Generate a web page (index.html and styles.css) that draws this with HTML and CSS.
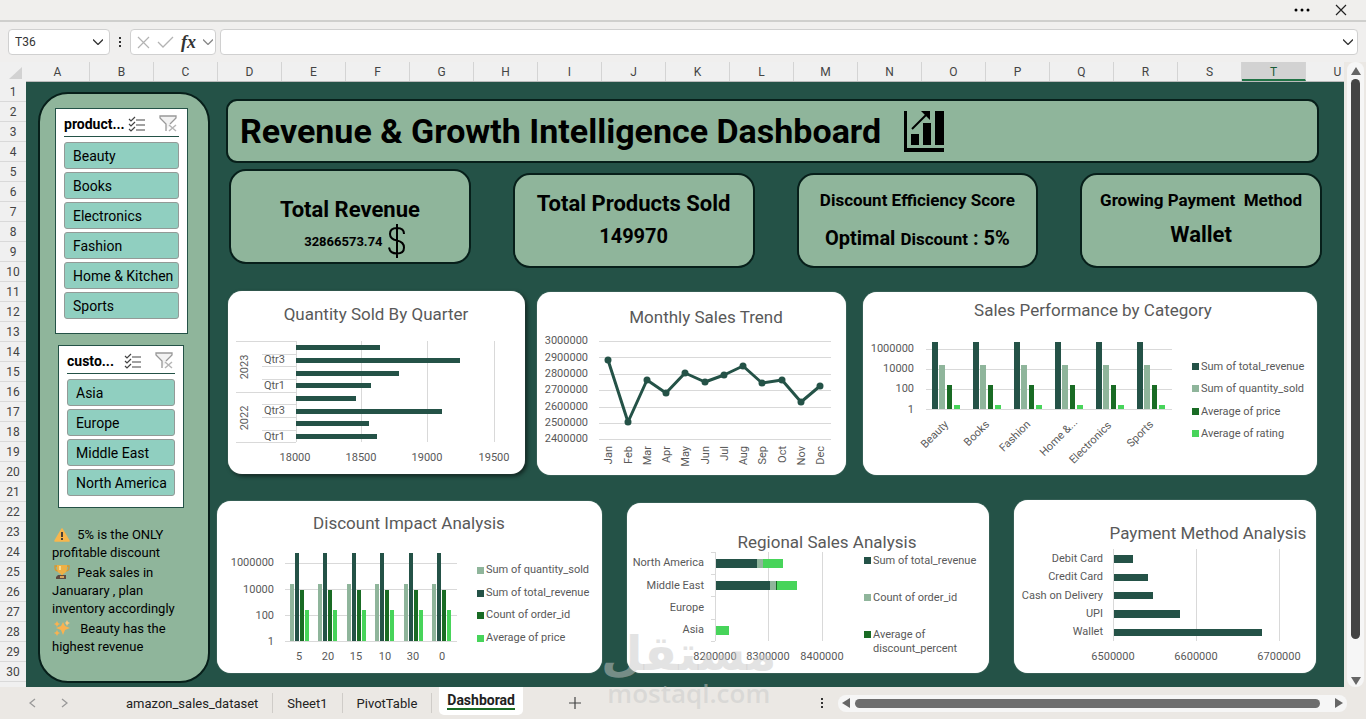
FILE: index.html
```html
<!DOCTYPE html>
<html lang="en">
<head>
<meta charset="UTF-8">
<meta name="viewport" content="width=device-width, initial-scale=1.0">
<title>Revenue &amp; Growth Intelligence Dashboard</title>
<link rel="stylesheet" href="styles.css">
</head>
<body>
<svg class="defs" width="0" height="0" aria-hidden="true">
    <symbol id="ic-multi" viewBox="0 0 18 16">
        <path d="M1 3l2 2 4-4M1 8l2 2 4-4M1 13l2 2 4-4M8 4h9M8 9h9M8 14h9" fill="none" stroke="#444" stroke-width="1.2"/>
    </symbol>
    <symbol id="ic-clear" viewBox="0 0 18 17">
        <path d="M1 1h16v3l-6 5v2l-4 4v-6L1 4z" fill="#f2f2f2"/>
        <path d="M7 16V9L1 3V1h16v2l-6 6" fill="none" stroke="#999" stroke-width="1.3"/>
        <path d="M10 10l7 6M17 10l-7 6" stroke="#b5b5b5" stroke-width="1.5"/>
    </symbol>
    <symbol id="ic-down" viewBox="0 0 10 6">
        <path d="M0 0.500l5 5 5-5" fill="none" stroke="currentColor" stroke-width="1.3"/>
    </symbol>
    <symbol id="ic-dots" viewBox="0 0 4 12">
        <path d="M1 1h2v2H1zM1 5h2v2H1zM1 9h2v2H1z" fill="#333"/>
    </symbol>
</svg>

<div class="app">
    <div class="titlebar">
        <button class="icon-btn" aria-label="More options"><svg width="16" height="4"><circle cx="2" cy="2" r="1.500"/><circle cx="8" cy="2" r="1.500"/><circle cx="14" cy="2" r="1.500"/></svg></button>
        <button class="icon-btn" aria-label="Close"><svg width="12" height="12"><path d="M1 1l10 10M11 1L1 11" stroke="#222" stroke-width="1.200"/></svg></button>
    </div>

    <div class="formula-bar">
        <div class="name-box">
            <input type="text" value="T36" aria-label="Name box">
            <svg width="10" height="6"><use href="#ic-down"/></svg>
        </div>
        <svg class="dots" width="4" height="12"><use href="#ic-dots"/></svg>
        <div class="fx-box">
            <button class="icon-btn" aria-label="Cancel"><svg width="13" height="13"><path d="M1 1l11 11M12 1L1 12" stroke="#b3b3b3" stroke-width="1.200"/></svg></button>
            <button class="icon-btn" aria-label="Enter"><svg width="17" height="12"><path d="M1 6l5 5L16 1" fill="none" stroke="#b3b3b3" stroke-width="1.300"/></svg></button>
            <button class="icon-btn fx" aria-label="Insert function"><i>fx</i></button>
            <svg class="faint" width="10" height="6"><use href="#ic-down"/></svg>
        </div>
        <div class="formula-input">
            <input type="text" aria-label="Formula">
            <svg width="10" height="6"><use href="#ic-down"/></svg>
        </div>
    </div>

    <div class="workspace">
        <div class="grid-area">
            <div class="corner"><svg width="13" height="12"><path d="M13 0v12H0z" fill="#d2d2d2"/></svg></div>
            <div class="cols">
                <span>A</span><span>B</span><span>C</span><span>D</span><span>E</span><span>F</span><span>G</span>
                <span>H</span><span>I</span><span>J</span><span>K</span><span>L</span><span>M</span><span>N</span>
                <span>O</span><span>P</span><span>Q</span><span>R</span><span>S</span><span class="selected">T</span><span>U</span>
            </div>
            <div class="rows">
                <span>1</span><span>2</span><span>3</span><span>4</span><span>5</span><span>6</span><span>7</span><span>8</span><span>9</span><span>10</span>
                <span>11</span><span>12</span><span>13</span><span>14</span><span>15</span><span>16</span><span>17</span><span>18</span><span>19</span><span>20</span>
                <span>21</span><span>22</span><span>23</span><span>24</span><span>25</span><span>26</span><span>27</span><span>28</span><span>29</span><span>30</span>
            </div>

            <div class="sheet">
                <aside class="sidebar">
                    <section class="slicer slicer-product">
                        <header>
                            <h3>product...</h3>
                            <svg width="18" height="16"><use href="#ic-multi"/></svg>
                            <svg width="18" height="17"><use href="#ic-clear"/></svg>
                        </header>
                        <button>Beauty</button>
                        <button>Books</button>
                        <button>Electronics</button>
                        <button>Fashion</button>
                        <button>Home &amp; Kitchen</button>
                        <button>Sports</button>
                    </section>
                    <section class="slicer slicer-region">
                        <header>
                            <h3>custo...</h3>
                            <svg width="18" height="16"><use href="#ic-multi"/></svg>
                            <svg width="18" height="17"><use href="#ic-clear"/></svg>
                        </header>
                        <button>Asia</button>
                        <button>Europe</button>
                        <button>Middle East</button>
                        <button>North America</button>
                    </section>
                    <div class="notes">
                        <p>
                            <svg width="16" height="14" viewBox="0 0 16 14"><path d="M8 1l7 12H1z" fill="#f8b64c" stroke="#f8b64c" stroke-width="1.500" stroke-linejoin="round"/><path d="M7 4h2v5H7zM7 10h2v2H7z" fill="#4a4038"/></svg>
                            5% is the ONLY profitable discount
                        </p>
                        <p>
                            <svg width="16" height="16" viewBox="0 0 16 16"><path d="M4 2H1v2q0 3 4 3M12 2h3v2q0 3-4 3" fill="none" stroke="#d9962e" stroke-width="1.300"/><path d="M3 1h10v3q0 5-4 6v2H7v-2Q3 9 3 4z" fill="#eeb044"/><path d="M5 2h2v4H5z" fill="#fbd988"/><path d="M4 11h8v4H2v-2z" fill="#5e4a40"/><path d="M6 12h4v2H6z" fill="#d9a45a"/></svg>
                            Peak sales in Januarary , plan inventory accordingly
                        </p>
                        <p>
                            <svg class="wide" width="16" height="16" viewBox="0 0 16 16"><path d="M9 2l2 4 5 2-5 2-2 5-2-5-5-2 5-2zM3 1l1 2 2 1-2 1-1 2-1-2-2-1 2-1zM3 10l1 2 2 1-2 1-1 2-1-2-2-1 2-1z" fill="#f9b250"/><path d="M13 0l1 2 2 1-2 1-1 2-1-2-1-1 1-1z" fill="#fbc87c"/></svg>
                            Beauty has the highest revenue
                        </p>
                    </div>
                </aside>

                <main>
                    <div class="banner">
                        <h1>Revenue &amp; Growth Intelligence Dashboard</h1>
                        <svg width="40" height="42" viewBox="0 0 40 42"><path d="M0 1h3v37h37v4H0z"/><path d="M7 24h8v11H7zM19 13h8v22h-8zM31 1h9v34h-9z"/><path d="M8 19L22 5" stroke="#000" stroke-width="2"/><path d="M17 1h9v9l-3-3-4-4z"/></svg>
                    </div>

                    <div class="kpis">
                        <section class="kpi raised">
                            <h2>Total Revenue</h2>
                            <p class="amount">32866573.74
                                <svg width="18" height="34" viewBox="0 0 18 34"><path d="M16 10q0-6-7-6-7 0-7 6 0 5 7 6.500 7 1.500 7 7 0 6-7 6-7 0-8-6M9 0v34" fill="none" stroke="#000" stroke-width="2"/></svg>
                            </p>
                        </section>
                        <section class="kpi">
                            <h2>Total Products Sold</h2>
                            <p class="value">149970</p>
                        </section>
                        <section class="kpi">
                            <h2 class="small">Discount Efficiency Score</h2>
                            <p class="score">Optimal <small>Discount</small> : 5%</p>
                        </section>
                        <section class="kpi">
                            <h2 class="small">Growing Payment&nbsp; Method</h2>
                            <p class="value wallet">Wallet</p>
                        </section>
                    </div>

                    <div class="charts charts-top">
                        <section class="card shadow">
                            <svg viewBox="0 0 297 183">
                                <path class="grid" d="M68 50v101M133 50v101M199 50v101M266 50v101M8 50h60M8 101h60M8 151h60M34 63h34M34 75h34M34 88h34M34 113h34M34 126h34M34 139h34"/>
                                <path class="c1" d="M68 54h84v5H68zM68 67h164v5H68zM68 80h103v5H68zM68 92h75v5H68zM68 105h60v5H68zM68 118h146v5H68zM68 130h73v5H68zM68 143h81v5H68z"/>
                                <text class="title" x="148" y="29">Quantity Sold By Quarter</text>
                                <g class="end">
                                    <text x="57" y="72">Qtr3</text><text x="57" y="98">Qtr1</text><text x="57" y="123">Qtr3</text><text x="57" y="149">Qtr1</text>
                                </g>
                                <g class="mid">
                                    <text transform="translate(20 76) rotate(-90)">2023</text>
                                    <text transform="translate(20 127) rotate(-90)">2022</text>
                                    <text x="67" y="170">18000</text><text x="133" y="170">18500</text><text x="199" y="170">19000</text><text x="266" y="170">19500</text>
                                </g>
                            </svg>
                        </section>
                        <section class="card">
                            <svg viewBox="0 0 309 183">
                                <path class="grid" d="M62 49h232M62 65h232M62 82h232M62 98h232M62 115h232M62 131h232M62 147h232"/>
                                <path class="line" d="M71 68L91 130 110 88 129 101 148 81 168 90 187 83 206 74 225 91 245 88 264 110 283 94"/>
                                <g class="c1">
                                    <circle cx="71" cy="68" r="3.500"/><circle cx="91" cy="130" r="3.500"/><circle cx="110" cy="88" r="3.500"/><circle cx="129" cy="101" r="3.500"/>
                                    <circle cx="148" cy="81" r="3.500"/><circle cx="168" cy="90" r="3.500"/><circle cx="187" cy="83" r="3.500"/><circle cx="206" cy="74" r="3.500"/>
                                    <circle cx="225" cy="91" r="3.500"/><circle cx="245" cy="88" r="3.500"/><circle cx="264" cy="110" r="3.500"/><circle cx="283" cy="94" r="3.500"/>
                                </g>
                                <text class="title" x="169" y="31">Monthly Sales Trend</text>
                                <g class="end">
                                    <text x="51" y="52">3000000</text><text x="51" y="69">2900000</text><text x="51" y="85">2800000</text><text x="51" y="101">2700000</text>
                                    <text x="51" y="118">2600000</text><text x="51" y="134">2500000</text><text x="51" y="150">2400000</text>
                                    <text transform="translate(75 154) rotate(-90)">Jan</text><text transform="translate(95 154) rotate(-90)">Feb</text>
                                    <text transform="translate(114 154) rotate(-90)">Mar</text><text transform="translate(133 154) rotate(-90)">Apr</text>
                                    <text transform="translate(152 154) rotate(-90)">May</text><text transform="translate(172 154) rotate(-90)">Jun</text>
                                    <text transform="translate(191 154) rotate(-90)">Jul</text><text transform="translate(210 154) rotate(-90)">Aug</text>
                                    <text transform="translate(229 154) rotate(-90)">Sep</text><text transform="translate(249 154) rotate(-90)">Oct</text>
                                    <text transform="translate(268 154) rotate(-90)">Nov</text><text transform="translate(287 154) rotate(-90)">Dec</text>
                                </g>
                            </svg>
                        </section>
                        <section class="card card-category">
                            <svg viewBox="0 0 454 183">
                                <path class="grid" d="M63 57h246M63 77h246M63 97h246M63 117h246"/>
                                <g id="cat-bars">
                                    <path class="c1" d="M69 50h6v67h-6z"/><path class="c2" d="M76 73h6v44h-6z"/><path class="c3" d="M84 93h5v24h-5z"/><path class="c4" d="M91 113h6v4h-6z"/>
                                </g>
                                <use href="#cat-bars" x="41"/><use href="#cat-bars" x="82"/><use href="#cat-bars" x="123"/><use href="#cat-bars" x="164"/><use href="#cat-bars" x="205"/>
                                <text class="title" x="230" y="24">Sales Performance by Category</text>
                                <g class="end">
                                    <text x="51" y="60">1000000</text><text x="51" y="80">10000</text><text x="51" y="100">100</text><text x="51" y="121">1</text>
                                    <text transform="translate(86 133) rotate(-45)">Beauty</text><text transform="translate(127 133) rotate(-45)">Books</text>
                                    <text transform="translate(168 133) rotate(-45)">Fashion</text><text transform="translate(215 131) rotate(-45)">Home &amp;...</text>
                                    <text transform="translate(249 134) rotate(-45)">Electronics</text><text transform="translate(291 133) rotate(-45)">Sports</text>
                                </g>
                                <path class="c1" d="M329 71h7v7h-7z"/><text x="338" y="78">Sum of total_revenue</text>
                                <path class="c2" d="M329 93h7v7h-7z"/><text x="338" y="100">Sum of quantity_sold</text>
                                <path class="c3" d="M329 116h7v7h-7z"/><text x="338" y="123">Average of price</text>
                                <path class="c4" d="M329 138h7v7h-7z"/><text x="338" y="145">Average of rating</text>
                            </svg>
                        </section>
                    </div>

                    <div class="charts charts-bottom">
                        <section class="card">
                            <svg viewBox="0 0 385 172">
                                <path class="grid" d="M68 62h172M68 88h172M68 114h172M68 140h172"/>
                                <g id="disc-bars">
                                    <path class="c2" d="M73 83h4v57h-4z"/><path class="c1" d="M78 52h4v88h-4z"/><path class="c3" d="M83 89h4v51h-4z"/><path class="c4" d="M88 109h4v31h-4z"/>
                                </g>
                                <use href="#disc-bars" x="28"/><use href="#disc-bars" x="57"/><use href="#disc-bars" x="85"/><use href="#disc-bars" x="114"/><use href="#disc-bars" x="142"/>
                                <text class="title" x="192" y="28">Discount Impact Analysis</text>
                                <g class="end">
                                    <text x="57" y="65">1000000</text><text x="57" y="92">10000</text><text x="57" y="118">100</text><text x="57" y="144">1</text>
                                </g>
                                <g class="mid">
                                    <text x="82" y="159">5</text><text x="111" y="159">20</text><text x="139" y="159">15</text><text x="168" y="159">10</text><text x="196" y="159">30</text><text x="225" y="159">0</text>
                                </g>
                                <path class="c2" d="M260 66h7v7h-7z"/><text x="269" y="72">Sum of quantity_sold</text>
                                <path class="c1" d="M260 89h7v7h-7z"/><text x="269" y="95">Sum of total_revenue</text>
                                <path class="c3" d="M260 111h7v7h-7z"/><text x="269" y="117">Count of order_id</text>
                                <path class="c4" d="M260 134h7v7h-7z"/><text x="269" y="140">Average of price</text>
                            </svg>
                        </section>
                        <section class="card">
                            <svg viewBox="0 0 362 170">
                                <path class="grid" d="M88 49v89M141 49v89M195 49v89M84 49h4M84 71h4M84 93h4M84 116h4M84 138h4"/>
                                <path class="c1" d="M89 56h41v9H89zM89 78h54v9H89z"/>
                                <path class="c2" d="M130 56h6v9h-6zM143 78h6v9h-6z"/>
                                <path class="c3" d="M149 78h1v9h-1z"/>
                                <path class="c4" d="M136 56h20v9h-20zM150 78h20v9h-20zM89 123h13v9H89z"/>
                                <text class="title" x="200" y="45">Regional Sales Analysis</text>
                                <g class="end">
                                    <text x="77" y="63">North America</text><text x="77" y="86">Middle East</text><text x="77" y="108">Europe</text><text x="77" y="130">Asia</text>
                                </g>
                                <g class="mid">
                                    <text x="88" y="157">8200000</text><text x="141" y="157">8300000</text><text x="195" y="157">8400000</text>
                                </g>
                                <path class="c1" d="M237 54h7v7h-7z"/><text x="246" y="61">Sum of total_revenue</text>
                                <path class="c2" d="M237 91h7v7h-7z"/><text x="246" y="98">Count of order_id</text>
                                <path class="c3" d="M237 128h7v7h-7z"/><text x="246" y="135">Average of</text><text x="246" y="149">discount_percent</text>
                            </svg>
                        </section>
                        <section class="card">
                            <svg viewBox="0 0 302 173">
                                <path class="grid" d="M99 49v92M182 49v92M265 49v92"/>
                                <path class="c1" d="M100 55h19v8h-19zM100 74h34v7h-34zM100 92h39v7h-39zM100 110h66v8h-66zM100 129h148v7H100z"/>
                                <text class="title" x="194" y="39">Payment Method Analysis</text>
                                <g class="end">
                                    <text x="89" y="62">Debit Card</text><text x="89" y="80">Credit Card</text><text x="89" y="99">Cash on Delivery</text><text x="89" y="117">UPI</text><text x="89" y="135">Wallet</text>
                                </g>
                                <g class="mid">
                                    <text x="99" y="160">6500000</text><text x="182" y="160">6600000</text><text x="265" y="160">6700000</text>
                                </g>
                            </svg>
                        </section>
                    </div>
                </main>
            </div>
        </div>

        <div class="vscroll">
            <svg width="10" height="8"><path d="M5 0l5 8H0z" fill="#666"/></svg>
            <div class="thumb"></div>
            <svg width="10" height="8"><path d="M0 0h10L5 8z" fill="#666"/></svg>
        </div>
    </div>

    <nav class="tabs">
        <button class="icon-btn arrow" aria-label="Previous sheet"><svg width="7" height="10"><path d="M6 1L1 5l5 4" fill="none" stroke="#999" stroke-width="1.300"/></svg></button>
        <button class="icon-btn arrow" aria-label="Next sheet"><svg width="7" height="10"><path d="M1 1l5 4-5 4" fill="none" stroke="#999" stroke-width="1.300"/></svg></button>
        <div class="tab-list">
            <button>amazon_sales_dataset</button>
            <button>Sheet1</button>
            <button>PivotTable</button>
            <button class="active"><span>Dashborad</span></button>
        </div>
        <button class="icon-btn add" aria-label="New sheet"><svg width="12" height="12"><path d="M6 0v12M0 6h12" stroke="#444" stroke-width="1.200"/></svg></button>
        <svg class="dots" width="4" height="12"><use href="#ic-dots"/></svg>
        <div class="hscroll">
            <svg width="8" height="10"><path d="M8 0v10L0 5z" fill="#666"/></svg>
            <div class="thumb"></div>
            <svg width="8" height="10"><path d="M0 0v10l8-5z" fill="#666"/></svg>
        </div>
    </nav>

    <div class="watermark">
        <span class="logo" lang="ar">مستقل</span>
        <span>mostaql.com</span>
    </div>
</div>
</body>
</html>
```
FILE: styles.css
```css
* {
    box-sizing: border-box;
}
body {
    margin: 0;
    background: #ebe8e4;
    font-family: Roboto, "Open Sans", sans-serif;
    font-size: 14px;
    color: #000;
}
h1, h2, h3, p {
    margin: 0;
}
button, input {
    font: inherit;
    color: inherit;
}
.defs {
    display: none;
}
.app {
    position: relative;
    display: flex;
    flex-direction: column;
    min-height: 100vh;
    overflow: hidden;
}
.icon-btn {
    display: flex;
    align-items: center;
    justify-content: center;
    padding: 0;
    border: none;
    background: none;
}

/* top bars */
.titlebar {
    display: flex;
    justify-content: flex-end;
    align-items: center;
    gap: 25px;
    height: 22px;
    padding-right: 19px;
    background: #f0efed;
    border-bottom: 2px solid #cfcfcd;
}
.formula-bar {
    display: flex;
    align-items: center;
    gap: 4px;
    height: 40px;
    padding: 0 8px;
    background: #f0efee;
}
.name-box, .fx-box, .formula-input {
    display: flex;
    align-items: center;
    height: 26px;
    background: #fff;
    border: 1px solid #d0d0d0;
    border-radius: 4px;
    color: #333;
}
.name-box {
    width: 102px;
    padding: 0 6px;
}
.name-box input, .formula-input input {
    flex: 1;
    min-width: 0;
    padding: 0;
    border: none;
    outline: none;
    background: none;
    font-size: 12px;
}
.dots {
    margin: 0 4px;
}
.fx-box {
    width: 86px;
    justify-content: space-between;
    padding: 0 2px 0 6px;
}
.fx {
    font-family: "Liberation Serif", serif;
    font-size: 18px;
    font-weight: 700;
}
.faint {
    color: #888;
}
.formula-input {
    flex: 1;
    padding: 0 4px;
}

/* grid */
.workspace {
    display: flex;
    flex: 1;
}
.grid-area {
    flex: 1;
    min-width: 0;
    display: grid;
    grid-template-columns: 26px 1fr;
    grid-template-rows: 20px 1fr;
    background: #f0f0f0;
    font-size: 12px;
    color: #444;
}
.corner {
    display: flex;
    align-items: center;
    justify-content: flex-end;
    padding: 2px 4px 0 0;
}
.cols {
    display: flex;
    overflow: hidden;
    border-bottom: 1px solid #bbb;
}
.cols span {
    flex: 0 0 64px;
    line-height: 20px;
    text-align: center;
    border-right: 1px solid #d4d4d4;
}
.cols .selected {
    background: #d2d2d2;
    color: #185c37;
    border-bottom: 2px solid #217346;
}
.rows {
    display: flex;
    flex-direction: column;
}
.rows span {
    height: 20px;
    line-height: 20px;
    text-align: center;
    border-bottom: 1px solid #d9d9d9;
}
.sheet {
    display: grid;
    grid-template-columns: 172px 1fr;
    gap: 7px;
    align-items: start;
    padding: 10px 22px 4px 12px;
    background: #245247;
    color: #000;
}

/* sidebar */
.sidebar {
    display: flex;
    flex-direction: column;
    gap: 11px;
    min-height: 591px;
    padding: 14px 10px 14px 12px;
    background: #8fb59b;
    border: 2px solid #071f1a;
    border-radius: 30px;
}
.slicer {
    display: flex;
    flex-direction: column;
    gap: 3px;
    padding: 2px 8px 14px;
    background: #fff;
    border: 1px solid #245247;
}
.slicer-product {
    margin: 0 10px 0 3px;
}
.slicer-region {
    margin: 0 14px 0 6px;
    padding-bottom: 11px;
}
.slicer header {
    display: flex;
    align-items: center;
    height: 26px;
    margin-bottom: 2px;
    border-bottom: 1px solid #245247;
}
.slicer h3 {
    flex: 1;
    font-size: 14px;
    font-weight: 700;
}
.slicer header svg {
    margin-right: 2px;
}
.slicer header svg:first-of-type {
    margin-right: 13px;
}
.slicer button {
    height: 27px;
    padding: 0 8px;
    text-align: left;
    white-space: nowrap;
    font-size: 14px;
    background: #90cfc0;
    border: 1px solid #939a97;
    border-radius: 3px;
}
.notes {
    padding-top: 7px;
    font-size: 13px;
    line-height: 18px;
}
.notes p {
    padding-bottom: 2px;
}
.notes svg {
    vertical-align: -3px;
    margin: 0 4px 0 2px;
}
.notes .wide {
    margin-right: 7px;
}

/* header and kpi cards */
.banner {
    display: flex;
    align-items: center;
    gap: 23px;
    height: 64px;
    margin: 7px 3px 0 9px;
    padding: 0 12px;
    background: #8fb59b;
    border: 2px solid #071f1a;
    border-radius: 11px;
}
.banner h1 {
    font-size: 34px;
    font-weight: 700;
    white-space: nowrap;
}
.kpis {
    display: flex;
    align-items: flex-end;
    gap: 42px;
    height: 99px;
    margin: 6px 0 0 12px;
}
.kpi {
    flex: 1;
    height: 95px;
    padding-top: 15px;
    text-align: center;
    font-weight: 700;
    background: #8fb59b;
    border: 2px solid #071f1a;
    border-radius: 17px;
}
.raised {
    align-self: flex-start;
    padding-top: 25px;
}
.kpi h2 {
    font-size: 22px;
    line-height: 28px;
}
.kpi .small {
    font-size: 17px;
    line-height: 20px;
}
.kpi .value {
    font-size: 20px;
    line-height: 36px;
}
.amount {
    display: flex;
    align-items: center;
    justify-content: center;
    gap: 5px;
    padding-left: 10px;
    font-size: 13px;
}
.score {
    padding-top: 14px;
    font-size: 20px;
    line-height: 28px;
}
.score small {
    font-size: 17px;
}
.kpi .wallet {
    padding-top: 7px;
    font-size: 22px;
}

/* charts */
.charts {
    display: grid;
    align-items: end;
}
.charts-top {
    grid-template-columns: 297fr 309fr 459fr;
    gap: 12px;
    margin: 23px 5px 0 11px;
}
.charts-bottom {
    grid-template-columns: 385fr 362fr 302fr;
    gap: 25px;
    margin: 25px 6px 0 0;
}
.card {
    background: #fff;
    border-radius: 14px;
    box-shadow: 0 0 1px #cfd8d4;
}
.card-category {
    margin-left: 5px;
}
.shadow {
    margin-bottom: 1px;
    box-shadow: 2px 2px 4px rgba(0, 0, 0, 0.6), 0 0 1px #bccbc2;
}
.card svg {
    display: block;
    width: 100%;
    height: auto;
}
.card text {
    font-size: 11px;
    fill: #595959;
}
.card .title {
    font-size: 17px;
    text-anchor: middle;
}
.mid {
    text-anchor: middle;
}
.end {
    text-anchor: end;
}
.grid {
    fill: none;
    stroke: #d9d9d9;
    shape-rendering: crispEdges;
}
.line {
    fill: none;
    stroke: #245247;
    stroke-width: 3;
    stroke-linejoin: round;
}
.c1 {
    fill: #245247;
}
.c2 {
    fill: #8fb59b;
}
.c3 {
    fill: #196b24;
}
.c4 {
    fill: #47d45a;
}

/* scrollbars */
.vscroll {
    display: flex;
    flex-direction: column;
    align-items: center;
    gap: 4px;
    width: 17px;
    margin: 0 2px 0 3px;
    padding: 5px 0 2px;
    background: #f6f6f6;
    border-radius: 8px;
}
.vscroll .thumb {
    width: 9px;
    flex: 1;
    margin-bottom: 34px;
    background: #444;
    border-radius: 5px;
}
.hscroll {
    display: flex;
    align-items: center;
    gap: 5px;
    flex: 1;
    height: 17px;
    padding: 0 4px;
    background: #f6f6f6;
    border-radius: 8px;
}
.hscroll .thumb {
    flex: 1;
    height: 9px;
    margin-right: 10px;
    background: #6e6e6e;
    border-radius: 5px;
}

/* sheet tabs */
.tabs {
    display: flex;
    align-items: center;
    height: 33px;
    padding: 0 19px 0 16px;
    background: #ebe8e4;
    border-bottom: 1px solid #fff;
}
.arrow {
    width: 32px;
}
.tab-list {
    display: flex;
    align-self: stretch;
    align-items: center;
    margin-left: 32px;
}
.tab-list button {
    height: 20px;
    padding: 0 14px;
    border: none;
    border-right: 1px solid #cfccc8;
    background: none;
    font-size: 13px;
    color: #222;
}
.tab-list .active {
    align-self: flex-start;
    height: 28px;
    margin-left: 7px;
    padding: 0 8px;
    background: #fff;
    border: none;
    border-radius: 0 0 5px 5px;
    font-size: 14px;
    font-weight: 700;
}
.active span {
    display: block;
    border-bottom: 2px solid #196b24;
}
.add {
    margin: 0 auto 0 46px;
}
.tabs .dots {
    margin: 0 14px 0 0;
}
.tabs .hscroll {
    flex: 0 1 509px;
}

.watermark {
    position: absolute;
    left: 601px;
    bottom: 12px;
    display: flex;
    flex-direction: column;
    align-items: center;
    font-family: "Open Sans", sans-serif;
    font-size: 26px;
    font-weight: 600;
    line-height: 30px;
    color: rgba(200, 200, 200, 0.5);
    pointer-events: none;
}
.watermark .logo {
    font-family: "DejaVu Sans", sans-serif;
    font-size: 48px;
    font-weight: 700;
    line-height: 50px;
}
```
